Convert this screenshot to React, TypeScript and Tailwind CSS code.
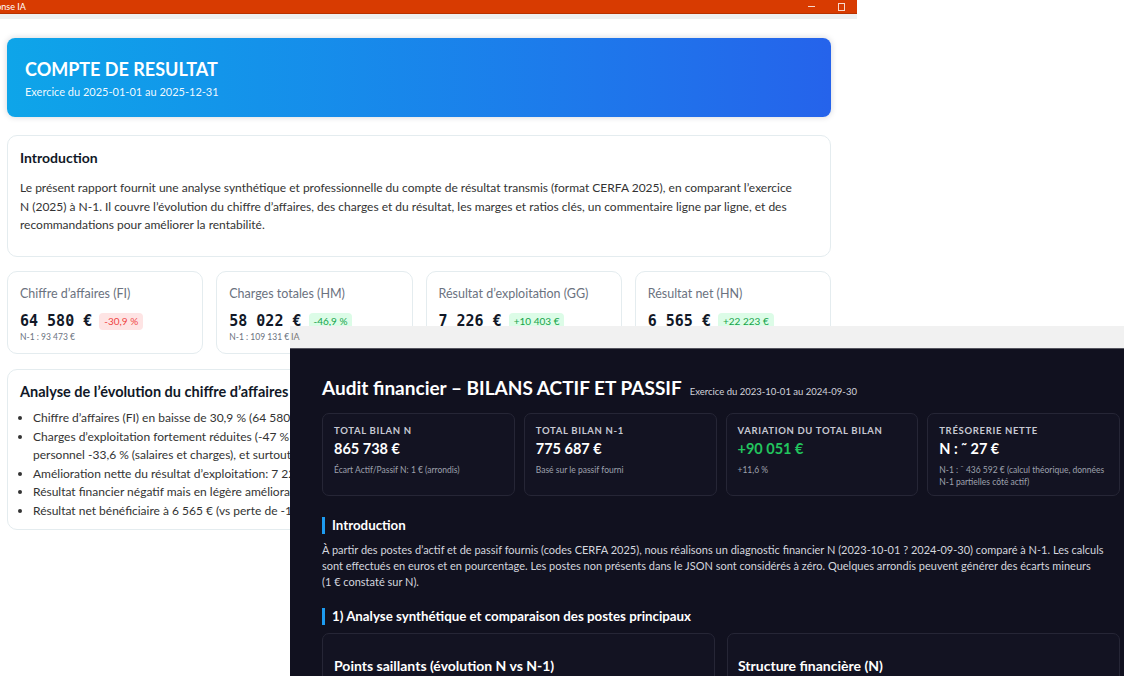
import React from 'react';

type Kpi = {
  label: string;
  value: string;
  badge: string;
  tone: 'up' | 'down';
  previous: string;
};

const reportKpis: Kpi[] = [
  { label: 'Chiffre d’affaires (FI)', value: '64 580 €', badge: '-30,9 %', tone: 'down', previous: 'N-1 : 93 473 €' },
  { label: 'Charges totales (HM)', value: '58 022 €', badge: '-46,9 %', tone: 'up', previous: 'N-1 : 109 131 €' },
  { label: 'Résultat d’exploitation (GG)', value: '7 226 €', badge: '+10 403 €', tone: 'up', previous: 'N-1 : -3 177 €' },
  { label: 'Résultat net (HN)', value: '6 565 €', badge: '+22 223 €', tone: 'up', previous: 'N-1 : -15 658 €' },
];

const auditKpis = [
  { label: 'Total bilan N', value: '865 738 €', note: 'Écart Actif/Passif N: 1 € (arrondis)', green: false },
  { label: 'Total bilan N-1', value: '775 687 €', note: 'Basé sur le passif fourni', green: false },
  { label: 'Variation du total bilan', value: '+90 051 €', note: '+11,6 %', green: true },
  {
    label: 'Trésorerie nette',
    value: 'N : ˜ 27 €',
    note: 'N-1 : ˜ 436 592 € (calcul théorique, données N-1 partielles côté actif)',
    green: false,
  },
];

function KpiCard({ kpi }: { kpi: Kpi }) {
  return (
    <div className="h-[83px] rounded-[10px] border border-[#e4ecef] px-[12px] pt-[14px]">
      <div className="text-[12.5px] leading-[16px] text-[#6b7280]">{kpi.label}</div>
      <div className="mt-[9px] flex items-center gap-[7px]">
        <span className="font-['DejaVu_Sans_Mono',monospace] text-[15px] font-bold leading-[20px] text-[#111827]">
          {kpi.value}
        </span>
        <span
          className={
            kpi.tone === 'down'
              ? 'rounded-[4px] bg-[#fee4e4] px-[5px] text-[10px] leading-[17px] text-[#ef4444]'
              : 'rounded-[4px] bg-[#dcfce7] px-[5px] text-[10px] leading-[17px] text-[#16a34a]'
          }
        >
          {kpi.badge}
        </span>
      </div>
      <div className="text-[8.5px] leading-[12px] text-[#6b7280]">{kpi.previous}</div>
    </div>
  );
}

function ReportWindow() {
  return (
    <div className="absolute left-0 top-0 flex h-[676px] w-[857px] flex-col overflow-hidden bg-white">
      {/* title bar */}
      <div className="flex h-[14px] shrink-0 items-center justify-between border-b border-[#b83200] bg-[#d83b01] text-[9px] leading-none text-white">
        <span className="-ml-[19px] whitespace-nowrap">Réponse IA</span>
        <div className="flex items-center gap-[23px] pr-[12px]">
          <span className="h-px w-[7px] bg-white/80" />
          <span className="h-[8px] w-[7px] border border-white/80" />
        </div>
      </div>
      <div className="h-[5px] shrink-0 bg-[#eef0f1]" />

      <div className="flex w-[838px] flex-col px-[7px] pt-[19px] text-[#333]">
        <div className="flex h-[79px] flex-col rounded-[8px] bg-linear-to-r from-[#0ea5e9] to-[#2563eb] px-[18px] pt-[20px] shadow-[0_0_6px_rgba(15,23,42,0.18)]">
          <h1 className="text-[18px] font-bold leading-[22px] text-white">COMPTE DE RESULTAT</h1>
          <p className="mt-[5px] text-[11px] leading-[14px] text-white/95">Exercice du 2025-01-01 au 2025-12-31</p>
        </div>

        <div className="mt-[18px] h-[122px] rounded-[10px] border border-[#e4ecef] px-[12px] pt-[13px]">
          <h2 className="text-[14px] font-bold leading-[18px] text-[#111827]">Introduction</h2>
          <p className="mt-[12px] text-[12px] leading-[18.5px]">
            Le présent rapport fournit une analyse synthétique et professionnelle du compte de résultat transmis
            (format CERFA 2025), en comparant l’exercice
            <br />
            N (2025) à N-1. Il couvre l’évolution du chiffre d’affaires, des charges et du résultat, les marges et
            ratios clés, un commentaire ligne par ligne, et des recommandations pour améliorer la rentabilité.
          </p>
        </div>

        <div className="mt-[14px] grid grid-cols-4 gap-[13px]">
          {reportKpis.map((k) => (
            <KpiCard key={k.label} kpi={k} />
          ))}
        </div>

        <div className="mt-[15px] h-[161px] overflow-hidden rounded-[10px] border border-[#e4ecef] px-[12px] pt-[13px]">
          <h2 className="text-[14.5px] font-bold leading-[18px] text-[#111827]">
            Analyse de l’évolution du chiffre d’affaires et des charges
          </h2>
          <ul className="mt-[8px] list-disc pl-[13px] text-[12px] leading-[18.6px]">
            <li className="whitespace-nowrap">Chiffre d’affaires (FI) en baisse de 30,9 % (64 580 € vs 93 473 €).</li>
            <li className="whitespace-nowrap">
              Charges d’exploitation fortement réduites (-47 % environ) : achats, charges externes et charges de
              <br />
              personnel -33,6 % (salaires et charges), et surtout baisse des dotations.
            </li>
            <li className="whitespace-nowrap">Amélioration nette du résultat d’exploitation: 7 226 € contre -3 177 € en N-1.</li>
            <li className="whitespace-nowrap">Résultat financier négatif mais en légère amélioration.</li>
            <li className="whitespace-nowrap">Résultat net bénéficiaire à 6 565 € (vs perte de -15 658 € en N-1).</li>
          </ul>
        </div>
      </div>
    </div>
  );
}

function SectionTitle({ children }: { children: React.ReactNode }) {
  return (
    <h2 className="border-l-[3px] border-[#1d9bf0] pl-[7px] text-[13.3px] font-bold leading-[17px] text-white">
      {children}
    </h2>
  );
}

function AuditWindow() {
  return (
    <div className="absolute left-[290px] top-[326px] flex h-[350px] w-[834px] flex-col overflow-hidden bg-[#11111f]">
      <div className="flex h-[23px] shrink-0 items-center border-b border-[#55555f] bg-[#f1f1f1] pl-[1px] text-[9px] text-[#777]">
        IA
      </div>
      <div className="w-[830px] shrink-0 pl-[32px] pt-[27px]">
        <div className="flex items-baseline gap-[8px] whitespace-nowrap">
          <h1 className="text-[19px] font-bold leading-[24px] text-white">Audit financier – BILANS ACTIF ET PASSIF</h1>
          <span className="text-[9.5px] text-[#d2d4dc]">Exercice du 2023-10-01 au 2024-09-30</span>
        </div>

        <div className="mt-[13px] grid w-[798px] grid-cols-4 gap-[9px]">
          {auditKpis.map((k) => (
            <div key={k.label} className="h-[83px] rounded-[7px] border border-[#262636] bg-[#131322] px-[11px] pt-[11px]">
              <div className="text-[9.5px] font-bold uppercase leading-[12px] tracking-[0.07em] text-[#c7c9d3]">
                {k.label}
              </div>
              <div
                className={
                  k.green
                    ? 'mt-[3px] text-[14.5px] font-bold leading-[18px] text-[#22c55e]'
                    : 'mt-[3px] text-[14.5px] font-bold leading-[18px] text-white'
                }
              >
                {k.value}
              </div>
              <div className="mt-[6px] text-[8.5px] leading-[12px] text-[#9ea1ad]">{k.note}</div>
            </div>
          ))}
        </div>

        <div className="mt-[21px] w-[798px]">
          <SectionTitle>Introduction</SectionTitle>
          <p className="mt-[8px] text-[11px] leading-[16px] text-[#d4d6de]">
            À partir des postes d’actif et de passif fournis (codes CERFA 2025), nous réalisons un diagnostic financier
            N (2023-10-01 ? 2024-09-30) comparé à N-1. Les calculs sont effectués en euros et en pourcentage. Les postes
            non présents dans le JSON sont considérés à zéro. Quelques arrondis peuvent générer des écarts mineurs
            <br />
            (1 € constaté sur N).
          </p>
        </div>

        <div className="mt-[18px] w-[798px]">
          <SectionTitle>1) Analyse synthétique et comparaison des postes principaux</SectionTitle>
          <div className="mt-[8px] grid grid-cols-2 gap-[12px]">
            <div className="h-[120px] rounded-[7px] border border-[#262636] bg-[#131322] pl-[11px] pt-[23px]">
              <h3 className="text-[14px] font-bold leading-[18px] text-white">Points saillants (évolution N vs N-1)</h3>
            </div>
            <div className="h-[120px] rounded-[7px] border border-[#262636] bg-[#131322] pl-[10px] pt-[23px]">
              <h3 className="text-[14px] font-bold leading-[18px] text-white">Structure financière (N)</h3>
            </div>
          </div>
        </div>
      </div>
    </div>
  );
}

export default function App() {
  return (
    <div className="relative h-[676px] w-[1124px] overflow-hidden bg-white font-['Lato',sans-serif]">
      <ReportWindow />
      <AuditWindow />
    </div>
  );
}
